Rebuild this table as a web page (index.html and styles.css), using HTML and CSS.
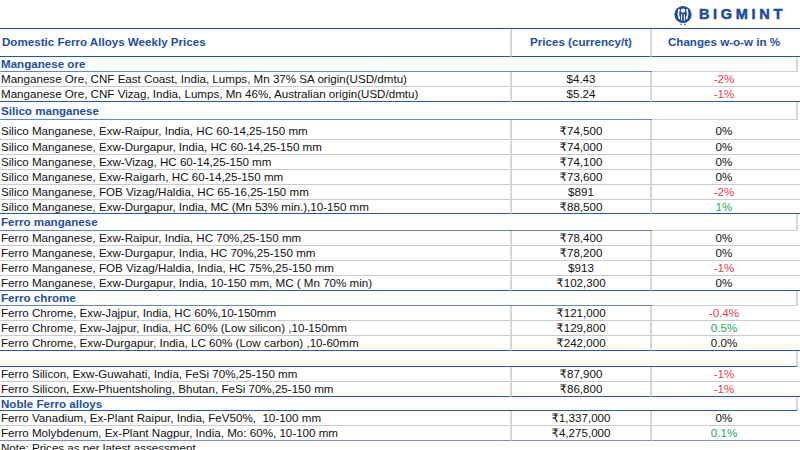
FILE: index.html
```html
<!DOCTYPE html>
<html>
<head>
<meta charset="utf-8">
<link rel="stylesheet" href="styles.css">
</head>
<body>
<div class="page">
  <div class="topbar">
    <div class="logo">
      <svg class="logo-icon" width="20" height="20" viewBox="0 0 20 20">
        <circle cx="10" cy="9.5" r="8.6" fill="#1b4b9b"/>
        <circle cx="10" cy="5.6" r="2.2" fill="#fff"/>
        <path d="M6.3 4.2 C5.2 6.5 5.2 10.5 6.6 14.2" stroke="#fff" stroke-width="1.6" fill="none"/>
        <path d="M13.7 4.2 C14.8 6.5 14.8 10.5 13.4 14.2" stroke="#fff" stroke-width="1.6" fill="none"/>
        <path d="M8.6 9.2 L8.6 15.5 M11.4 9.2 L11.4 15.5" stroke="#fff" stroke-width="1.1"/>
        <circle cx="8" cy="19.2" r="0.8" fill="#1b4b9b"/>
        <circle cx="12" cy="19.2" r="0.8" fill="#1b4b9b"/>
      </svg>
      <span class="logo-text">BIGMINT</span>
    </div>
  </div>

  <div class="table">
    <div class="row head">
      <div class="c1">Domestic Ferro Alloys Weekly Prices</div>
      <div class="c2">Prices (currency/t)</div>
      <div class="c3">Changes w-o-w in %</div>
    </div>

    <div class="cat h15"><div class="ct">Manganese ore</div><div class="ce"></div></div>
    <div class="row"><div class="c1">Manganese Ore, CNF East Coast, India, Lumps, Mn 37% SA origin(USD/dmtu)</div><div class="c2">$4.43</div><div class="c3 red">-2%</div></div>
    <div class="row last"><div class="c1">Manganese Ore, CNF Vizag, India, Lumps, Mn 46%, Australian origin(USD/dmtu)</div><div class="c2">$5.24</div><div class="c3 red">-1%</div></div>

    <div class="cat h18"><div class="ct">Silico manganese</div><div class="ce"></div></div>
    <div class="row tall"><div class="c1">Silico Manganese, Exw-Raipur, India, HC 60-14,25-150 mm</div><div class="c2">₹74,500</div><div class="c3">0%</div></div>
    <div class="row"><div class="c1">Silico Manganese, Exw-Durgapur, India, HC 60-14,25-150 mm</div><div class="c2">₹74,000</div><div class="c3">0%</div></div>
    <div class="row"><div class="c1">Silico Manganese, Exw-Vizag, HC 60-14,25-150 mm</div><div class="c2">₹74,100</div><div class="c3">0%</div></div>
    <div class="row"><div class="c1">Silico Manganese, Exw-Raigarh, HC 60-14,25-150 mm</div><div class="c2">₹73,600</div><div class="c3">0%</div></div>
    <div class="row"><div class="c1">Silico Manganese, FOB Vizag/Haldia, HC 65-16,25-150 mm</div><div class="c2">$891</div><div class="c3 red">-2%</div></div>
    <div class="row last h14"><div class="c1">Silico Manganese, Exw-Durgapur, India, MC (Mn 53% min.),10-150 mm</div><div class="c2">₹88,500</div><div class="c3 green">1%</div></div>

    <div class="cat h17"><div class="ct">Ferro manganese</div><div class="ce"></div></div>
    <div class="row"><div class="c1">Ferro Manganese, Exw-Raipur, India, HC 70%,25-150 mm</div><div class="c2">₹78,400</div><div class="c3">0%</div></div>
    <div class="row"><div class="c1">Ferro Manganese, Exw-Durgapur, India, HC 70%,25-150 mm</div><div class="c2">₹78,200</div><div class="c3">0%</div></div>
    <div class="row"><div class="c1">Ferro Manganese, FOB Vizag/Haldia, India, HC 75%,25-150 mm</div><div class="c2">$913</div><div class="c3 red">-1%</div></div>
    <div class="row last"><div class="c1">Ferro Manganese, Exw-Durgapur, India, 10-150 mm, MC ( Mn 70% min)</div><div class="c2">₹102,300</div><div class="c3">0%</div></div>

    <div class="cat h15"><div class="ct">Ferro chrome</div><div class="ce"></div></div>
    <div class="row"><div class="c1">Ferro Chrome, Exw-Jajpur, India, HC 60%,10-150mm</div><div class="c2">₹121,000</div><div class="c3 red">-0.4%</div></div>
    <div class="row"><div class="c1">Ferro Chrome, Exw-Jajpur, India, HC 60% (Low silicon) ,10-150mm</div><div class="c2">₹129,800</div><div class="c3 green">0.5%</div></div>
    <div class="row last"><div class="c1">Ferro Chrome, Exw-Durgapur, India, LC 60% (Low carbon) ,10-60mm</div><div class="c2">₹242,000</div><div class="c3">0.0%</div></div>

    <div class="cat h16 full"><div class="ct"></div><div class="ce"></div></div>
    <div class="row"><div class="c1">Ferro Silicon, Exw-Guwahati, India, FeSi 70%,25-150 mm</div><div class="c2">₹87,900</div><div class="c3 red">-1%</div></div>
    <div class="row last"><div class="c1">Ferro Silicon, Exw-Phuentsholing, Bhutan, FeSi 70%,25-150 mm</div><div class="c2">₹86,800</div><div class="c3 red">-1%</div></div>

    <div class="cat h14 full"><div class="ct">Noble Ferro alloys</div><div class="ce"></div></div>
    <div class="row"><div class="c1">Ferro Vanadium, Ex-Plant Raipur, India, FeV50%,&nbsp; 10-100 mm</div><div class="c2">₹1,337,000</div><div class="c3">0%</div></div>
    <div class="row last light"><div class="c1">Ferro Molybdenum, Ex-Plant Nagpur, India, Mo: 60%, 10-100 mm</div><div class="c2">₹4,275,000</div><div class="c3 green">0.1%</div></div>
  </div>

  <div class="note">Note: Prices as per latest assessment</div>
</div>
</body>
</html>
```

FILE: styles.css
```css
* { box-sizing: border-box; }
html, body { margin: 0; padding: 0; background: #fff; }
body {
  font-family: "Liberation Sans", Arial, "DejaVu Sans", sans-serif;
  font-size: 11.6px;
  color: #111;
  width: 800px;
  height: 450px;
  overflow: hidden;
}
.page { width: 800px; }

.topbar {
  height: 28px;
  display: flex;
  justify-content: flex-end;
  align-items: center;
  padding-right: 14px;
}
.logo { display: flex; align-items: center; gap: 6px; margin-top: 1px; }
.logo-icon { display: block; }
.logo-text {
  color: #1b4b9b;
  font-weight: 700;
  font-size: 14.5px;
  letter-spacing: 3.7px;
  line-height: 1;
  -webkit-text-stroke: 0.5px #1b4b9b;
}

.table { border-top: 1px solid #2457a6; }

.row {
  display: grid;
  grid-template-columns: 510px 142px 148px;
  height: 15px;
  line-height: 14px;
}
.row > div {
  border-bottom: 1px solid #cbcbcb;
  white-space: nowrap;
  overflow: hidden;
}
.row .c1 { padding-left: 1px; }
.row .c2 {
  text-align: center;
  border-left: 2px solid #d6d6d6;
  border-right: 2px solid #d6d6d6;
}
.row .c3 { text-align: center; padding-right: 4px; }
.row.last > div { border-bottom-color: #2a5ba8; }
.row.last.light > div { border-bottom-color: #6e93cc; }
.row.tall { height: 20px; line-height: 21px; }
.row.h14 { height: 14px; line-height: 13px; }

.row.head {
  height: 28px;
  line-height: 26px;
  font-weight: 700;
  color: #1f4f9f;
}
.row.head > div { border-bottom: 1px solid #2457a6; }
.row.head .c1 { padding-left: 2px; }
.row.head .c2 { border-left: 2px solid #d6d6d6; border-right: 2px solid #d6d6d6; }

.red { color: #ec3b4c; }
.green { color: #19a85a; }

.cat {
  display: grid;
  grid-template-columns: 652px 146px;
  font-weight: 700;
  color: #1f4f9f;
}
.cat .ct {
  padding-left: 1px;
  border-bottom: 1px solid #5f89c8;
  white-space: nowrap;
}
.cat .ce {
  border-bottom: 1px solid #cfcfcf;
  border-right: 2px solid #d6d6d6;
}
.cat.full .ct, .cat.full .ce { border-bottom-color: #2a5ba8; }
.cat.h14 { height: 14px; line-height: 13px; }
.cat.h15 { height: 15px; line-height: 14px; }
.cat.h16 { height: 16px; line-height: 15px; }
.cat.h17 { height: 17px; line-height: 16px; }
.cat.h18 { height: 18px; line-height: 17px; }

.note {
  padding-left: 1px;
  line-height: 14px;
}
```
